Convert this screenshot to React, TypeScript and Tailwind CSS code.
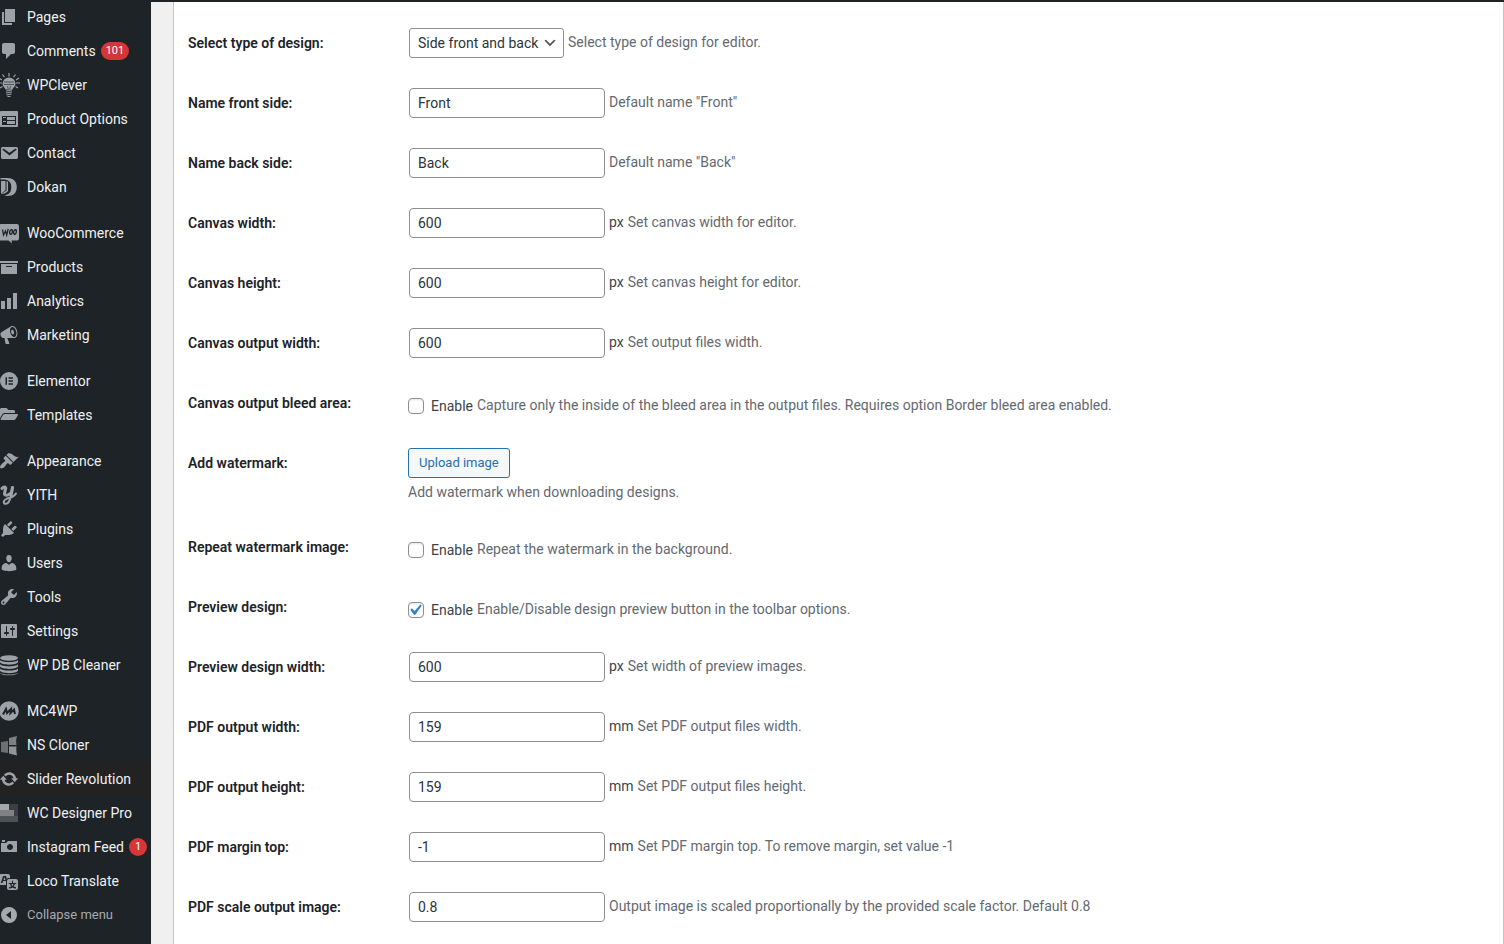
import React from 'react';
import { FaFolderOpen } from 'react-icons/fa';

type MenuItem = {
  name: string;
  icon: React.ReactNode;
  badge?: string;
  active?: boolean;
};

type Field = {
  id: string;
  label: string;
  type: 'select' | 'text' | 'checkbox' | 'button';
  value?: string;
  checked?: boolean;
  unit?: string;
  description: string;
};

function Icon({ d }: { d: string }) {
  return <path fillRule="evenodd" d={d} />;
}

const menu: MenuItem[][] = [
  [
    { name: 'Pages', icon: <Icon d="M6 15V2h10v13H6zm-1 1h8v2H3V5h2v11z" /> },
    {
      name: 'Comments',
      badge: '101',
      icon: <Icon d="M5 2h9c1.1 0 2 .9 2 2v7c0 1.1-.9 2-2 2h-2l-5 5v-5H5c-1.1 0-2-.9-2-2V4c0-1.1.9-2 2-2z" />,
    },
    {
      name: 'WPClever',
      icon: (
        <>
          <path d="M10 2.500a6.500 6.500 0 0 0-6.500 6.300c0 2.600 2.300 3.700 3 5.700h7c.7-2 3-3.100 3-5.700A6.500 6.500 0 0 0 10 2.500z" />
          <g fill="none" stroke="currentColor" strokeWidth="1.200">
            <path d="M10 -2v3.500M3.500 -.5l2 2.600M16.500 -.5l-2 2.600M0 3l3 2M20 3l-3 2M-1 8h4M17 8h4M1 13l2.500-1.500M19 13l-2.500-1.500" />
            <path d="M7 16l6-1M7 18l6-1M7.500 20l5-1M8.500 21.500h3" />
          </g>
          <path d="M5 7h10M5 9.500h10M8.500 11l.7 3M11.500 11l-.7 3" fill="none" stroke="#1d2327" strokeWidth=".6" />
        </>
      ),
    },
    {
      name: 'Product Options',
      icon: <Icon d="M2 2h16c.55 0 1 .45 1 1v14c0 .55-.45 1-1 1H2c-.55 0-1-.45-1-1V3c0-.55.45-1 1-1zm15 14V7H3v9h14zM4 8v1h3V8H4zm4 0v3h8V8H8zm-4 4v1h3v-1H4zm4 0v3h8v-3H8z" />,
    },
    {
      name: 'Contact',
      icon: <Icon d="M3.870 4h13.250C18.370 4 19 4.590 19 5.790v8.420c0 1.190-.63 1.790-1.880 1.790H3.870c-1.250 0-1.880-.6-1.880-1.790V5.790c0-1.200.63-1.790 1.880-1.790zm6.620 8.600l6.740-5.530c.24-.2.43-.66.13-1.070-.29-.41-.82-.42-1.170-.17l-5.700 3.860L4.800 5.830c-.35-.25-.88-.24-1.170.17-.3.41-.11.87.13 1.070z" />,
    },
    {
      name: 'Dokan',
      icon: (
        <>
          <path d="M1.500 1H8c6 0 9.800 3.200 9.800 9S14.500 19 8.500 19c-1.500 0-2-.3-2.500-1 4.500-.5 6.300-3.500 6.300-8 0-5-2.800-7.300-7.300-7.500H1.500z" />
          <path d="M2 4h4.500v9L2 17z" />
          <path d="M7.500 4.500H9v9.500c-1.500 1.800-4 3-7 3l5.500-3.500z" />
        </>
      ),
    },
  ],
  [
    {
      name: 'WooCommerce',
      icon: (
        <>
          <path d="M2.500 1h15A2.300 2.300 0 0 1 20 3.300v12a2.300 2.300 0 0 1-2.500 2.200h-5l.5 3-3.500-3h-7A2.300 2.300 0 0 1 0 15.300v-12A2.300 2.300 0 0 1 2.500 1z" />
          <path d="M3.500 6.500l1 5.500 2-4 1.200 4 1.500-6" fill="none" stroke="#1d2327" strokeWidth="1.300" />
          <g fill="none" stroke="#1d2327" strokeWidth="1.300">
            <ellipse cx="12" cy="9" rx="1.300" ry="2.300" transform="rotate(12 12 9)" />
            <ellipse cx="16" cy="9" rx="1.300" ry="2.300" transform="rotate(12 16 9)" />
          </g>
        </>
      ),
    },
    { name: 'Products', icon: <Icon d="M19 4v2H1V4h18zM2 7h16v10H2V7zm11 3V9H7v1h6z" /> },
    { name: 'Analytics', icon: <Icon d="M18 18V2h-4v16h4zm-6 0V7H8v11h4zm-6 0v-8H2v8h4z" /> },
    {
      name: 'Marketing',
      icon: <Icon d="M18.150 5.940c.46 1.620.38 3.220-.02 4.480-.42 1.280-1.260 2.180-2.300 2.480-.16.06-.26.06-.4.06-.06.02-.12.02-.18.02-.06.02-.14.02-.22.02h-6.800l2.220 5.500c.02.14-.06.26-.14.34-.08.1-.24.16-.34.16H6.950c-.1 0-.26-.06-.34-.16-.08-.08-.16-.2-.14-.34l-1-5.500H4.250l-.02-.02c-.5.06-1.080-.18-1.540-.62s-.88-1.080-1.060-1.880c-.24-.8-.2-1.560-.02-2.200.18-.62.58-1.080 1.060-1.300l.02-.02 9-5.400c.1-.06.18-.1.24-.16.06-.04.14-.08.24-.12.16-.08.28-.12.5-.18 1.040-.3 2.240.1 3.220.98s1.840 2.240 2.260 3.860zm-2.580 5.980h-.02c.4-.1.74-.34 1.040-.7.58-.7.86-1.760.86-3.040 0-.64-.1-1.300-.28-1.980-.34-1.360-1.020-2.500-1.780-3.240s-1.680-1.100-2.460-.88c-.82.22-1.400.96-1.700 2-.32 1.040-.28 2.360.06 3.720.38 1.360 1 2.500 1.800 3.240.78.74 1.620 1.100 2.480.88zm-2.540-7.080c.22-.04.42-.02.62.04.38.16.76.48 1.020 1s.42 1.200.42 1.780c0 .3-.04.56-.12.8-.18.48-.44.84-.86.94-.34.1-.8-.06-1.140-.4s-.64-.86-.78-1.500c-.18-.62-.12-1.240.02-1.720s.48-.84.82-.94z" />,
    },
  ],
  [
    { name: 'Elementor', icon: <Icon d="M10 1a9 9 0 1 1 0 18a9 9 0 0 1 0-18zM6.500 6.200v7.600H8V6.200zM9.500 6.200v1.500h4.500V6.200zM9.500 9.200v1.500h4.500V9.200zM9.500 12.300v1.500h4.500v-1.500z" /> },
    { name: 'Templates', icon: <FaFolderOpen x="1" y="0" size={18} /> },
  ],
  [
    {
      name: 'Appearance',
      icon: <Icon d="M14.480 11.060L7.410 3.990l1.500-1.500c.5-.56 2.300-.47 3.510.32 1.210.8 1.430 1.280 2.910 2.100 1.180.64 2.450 1.260 4.450.85zm-.71.71L6.700 4.700 4.930 6.470c-.39.39-.39 1.020 0 1.410l1.060 1.060c.39.39.39 1.030 0 1.420-.6.6-1.430 1.110-2.210 1.690-.35.26-.7.53-1.010.84C1.430 14.230.4 16.080 1.400 17.070c.99 1 2.840-.03 4.180-1.360.31-.31.58-.66.85-1.020.57-.78 1.080-1.610 1.690-2.210.39-.39 1.020-.39 1.410 0l1.060 1.060c.39.39 1.020.39 1.410 0z" />,
    },
    {
      name: 'YITH',
      icon: (
        <g fill="none" stroke="currentColor" strokeLinecap="round">
          <path d="M3 3.500c1.500-2 4-2 3.700 0L5.500 8c-.5 3 3 3 5.500 .5" strokeWidth="3" />
          <path d="M13.500 2l-1.500 8.500c-1 5-2.800 8.300-5.200 8.300-3 0-2.800-3.500.700-5L13 12c2-.8 3-1.800 4-3.500" strokeWidth="2" />
          <path d="M13.500 2.500l-1.500 8" strokeWidth="3.200" />
        </g>
      ),
    },
    {
      name: 'Plugins',
      icon: <Icon d="M13.110 4.360L9.870 7.600 8 5.730l3.240-3.240c.35-.34 1.050-.2 1.560.32.52.51.66 1.210.31 1.550zm-8 1.770l.91-1.120 9.010 9.010-1.190.84c-.71.71-2.630 1.160-3.820 1.160H6.140L4.900 17.260c-.59.59-1.540.59-2.120 0-.59-.58-.59-1.530 0-2.120l1.240-1.240v-3.880c0-1.130.4-3.190 1.090-3.890zm7.260 3.970l3.240-3.240c.34-.35 1.040-.21 1.550.31.52.51.66 1.210.31 1.550l-3.240 3.250z" />,
    },
    {
      name: 'Users',
      icon: <Icon d="M10 9.250c-2.270 0-2.730-3.440-2.730-3.440C7 4.020 7.820 2 9.970 2c2.160 0 2.980 2.020 2.710 3.810 0 0-.41 3.440-2.680 3.440zm0 2.570L12.720 10c2.390 0 4.520 2.330 4.520 4.530v2.490s-3.650 1.130-7.240 1.130c-3.650 0-7.240-1.130-7.240-1.130v-2.490c0-2.250 1.940-4.480 4.470-4.480z" />,
    },
    {
      name: 'Tools',
      icon: <Icon d="M16.680 9.770c-1.340 1.340-3.300 1.670-4.950.99l-5.410 6.520c-.99.99-2.590.99-3.580 0s-.99-2.590 0-3.570l6.520-5.420c-.68-1.650-.35-3.610.99-4.950 1.280-1.280 3.120-1.620 4.720-1.060l-2.890 2.890 2.820 2.820 2.860-2.870c.53 1.580.18 3.390-1.080 4.650zM3.810 16.210c.4.39 1.040.39 1.430 0 .4-.4.4-1.040 0-1.430-.39-.4-1.030-.4-1.430 0-.39.39-.39 1.030 0 1.430z" />,
    },
    {
      name: 'Settings',
      icon: <Icon d="M18 16V4c0-.55-.45-1-1-1H3c-.55 0-1 .45-1 1v12c0 .55.45 1 1 1h14c.55 0 1-.45 1-1zM8 11h1c.55 0 1 .45 1 1s-.45 1-1 1H8v1.500c0 .28-.22.5-.5.5s-.5-.22-.5-.5V13H6c-.55 0-1-.45-1-1s.45-1 1-1h1V5.500c0-.28.22-.5.5-.5s.5.22.5.5V11zm5-2h-1c-.55 0-1-.45-1-1s.45-1 1-1h1V5.500c0-.28.22-.5.5-.5s.5.22.5.5V7h1c.55 0 1 .45 1 1s-.45 1-1 1h-1v5.500c0 .28-.22.5-.5.5s-.5-.22-.5-.5V9z" />,
    },
    {
      name: 'WP DB Cleaner',
      icon: (
        <>
          <ellipse cx="10" cy="3" rx="9" ry="2.800" />
          <path d="M1 5c2 2.800 16 2.800 18 0v2.300c-2 3.200-16 3.200-18 0zM1 9.300c2 2.800 16 2.800 18 0v2.300c-2 3.200-16 3.200-18 0zM1 13.500c2 2.800 16 2.800 18 0v2.300c-2 3.200-16 3.200-18 0zM1 17.500c2 2.800 16 2.800 18 0-.500 3.500-17 4-18 0z" />
        </>
      ),
    },
  ],
  [
    {
      name: 'MC4WP',
      icon: (
        <>
          <circle cx="10" cy="10" r="9.800" />
          <path d="M4 13.500l3-5.500 1 4 4-4-.500 4 3.500-3.500 1 4.500" fill="none" stroke="#1d2327" strokeWidth="2" />
        </>
      ),
    },
    {
      name: 'NS Cloner',
      icon: (
        <>
          <path d="M2 7l7-1v12l-7-1z" fill="#6d7072" />
          <path d="M10 3l8-2c-1 3-1 6-.500 9H10z" fill="#7e8183" />
          <path d="M10 11.500h7.500c-.500 3 0 6 .500 9l-8-2z" fill="#919496" />
        </>
      ),
    },
    {
      name: 'Slider Revolution',
      active: true,
      icon: <Icon d="M10.200 3.280c3.530 0 6.430 2.610 6.920 6h2.080l-3.500 4-3.500-4h2.320c-.45-1.970-2.210-3.450-4.320-3.450-1.450 0-2.730.71-3.540 1.780L4.950 5.660C6.230 4.200 8.110 3.280 10.200 3.280zm-.4 13.440c-3.520 0-6.430-2.610-6.920-6H.8l3.500-4c1.170 1.330 2.330 2.670 3.500 4H5.480c.45 1.970 2.210 3.450 4.320 3.450 1.450 0 2.730-.71 3.540-1.780l1.710 1.950c-1.280 1.460-3.150 2.380-5.250 2.380z" />,
    },
    {
      name: 'WC Designer Pro',
      icon: (
        <>
          <path d="M1 1h18v18H1z" fill="#3c3f42" />
          <path d="M1 13h18v6H1z" fill="#4f5254" />
          <path d="M1 7h14v6H1z" fill="#7f8183" />
          <path d="M1 1h9v6H1z" fill="#a4a7aa" />
        </>
      ),
    },
    {
      name: 'Instagram Feed',
      badge: '1',
      icon: <Icon d="M6 5V3H3v2h3zm12 10V4H9L7 6H2v9h16zm-7-8c1.650 0 3 1.350 3 3s-1.350 3-3 3-3-1.350-3-3 1.350-3 3-3z" />,
    },
    {
      name: 'Loco Translate',
      icon: <Icon d="M11 7H9.490c-.63 0-1.250.3-1.590.7L7 5H4.130l-2.390 7h1.690l.74-2H7v4H2c-1.100 0-2-.9-2-2V5c0-1.100.9-2 2-2h7c1.100 0 2 .9 2 2v2zM6.510 9H4.490l1-2.930zM10 8h7c1.100 0 2 .9 2 2v7c0 1.100-.9 2-2 2h-7c-1.100 0-2-.9-2-2v-7c0-1.100.9-2 2-2zm7.250 5v-1.080h-3.170V9.750h-1.160v2.170H9.750V13h1.280c.11.85.56 1.850 1.280 2.620-.87.36-1.890.62-2.310.62-.01.02.22.97.2 1.460.84 0 2.210-.5 3.280-1.150 1.090.65 2.480 1.150 3.340 1.150-.02-.49.2-1.440.2-1.460-.43 0-1.490-.27-2.380-.63.7-.77 1.140-1.770 1.250-2.610h1.060zm-3.810 1.930c-.5-.46-.85-1.130-1.010-1.930h2.090c-.17.8-.51 1.470-1 1.930l-.04.03s-.03-.02-.04-.03z" />,
    },
  ],
];

const fields: Field[] = [
  { id: 'type', label: 'Select type of design:', type: 'select', value: 'Side front and back', description: 'Select type of design for editor.' },
  { id: 'front', label: 'Name front side:', type: 'text', value: 'Front', description: 'Default name "Front"' },
  { id: 'back', label: 'Name back side:', type: 'text', value: 'Back', description: 'Default name "Back"' },
  { id: 'canvas-width', label: 'Canvas width:', type: 'text', value: '600', unit: 'px', description: 'Set canvas width for editor.' },
  { id: 'canvas-height', label: 'Canvas height:', type: 'text', value: '600', unit: 'px', description: 'Set canvas height for editor.' },
  { id: 'output-width', label: 'Canvas output width:', type: 'text', value: '600', unit: 'px', description: 'Set output files width.' },
  {
    id: 'bleed',
    label: 'Canvas output bleed area:',
    type: 'checkbox',
    description: 'Capture only the inside of the bleed area in the output files. Requires option Border bleed area enabled.',
  },
  { id: 'watermark', label: 'Add watermark:', type: 'button', value: 'Upload image', description: 'Add watermark when downloading designs.' },
  { id: 'repeat', label: 'Repeat watermark image:', type: 'checkbox', description: 'Repeat the watermark in the background.' },
  { id: 'preview', label: 'Preview design:', type: 'checkbox', checked: true, description: 'Enable/Disable design preview button in the toolbar options.' },
  { id: 'preview-width', label: 'Preview design width:', type: 'text', value: '600', unit: 'px', description: 'Set width of preview images.' },
  { id: 'pdf-width', label: 'PDF output width:', type: 'text', value: '159', unit: 'mm', description: 'Set PDF output files width.' },
  { id: 'pdf-height', label: 'PDF output height:', type: 'text', value: '159', unit: 'mm', description: 'Set PDF output files height.' },
  { id: 'pdf-margin', label: 'PDF margin top:', type: 'text', value: '-1', unit: 'mm', description: 'Set PDF margin top. To remove margin, set value -1' },
  { id: 'pdf-scale', label: 'PDF scale output image:', type: 'text', value: '0.8', description: 'Output image is scaled proportionally by the provided scale factor. Default 0.8' },
];

function Sidebar() {
  return (
    <nav className="flex w-[151px] shrink-0 flex-col gap-3 overflow-hidden bg-[#1d2327] text-[#f0f0f1]">
      {menu.map((group, i) => (
        <ul key={i}>
          {group.map((item) => (
            <li key={item.name} className={item.active ? 'bg-[#222222]' : ''}>
              <a href="#" className="flex h-[34px] items-center gap-2 whitespace-nowrap">
                <svg viewBox="0 0 20 20" className="-ml-px size-5 shrink-0 overflow-visible fill-current text-[#9ca2a7]" aria-hidden="true">
                  {item.icon}
                </svg>
                <span className="flex items-center gap-[5px]">
                  {item.name}
                  {item.badge && (
                    <span className="h-[18px] min-w-[18px] rounded-full bg-[#d63638] px-[5px] text-center text-[11px] leading-[18px] text-white">
                      {item.badge}
                    </span>
                  )}
                </span>
              </a>
            </li>
          ))}
          {i === menu.length - 1 && (
            <li>
              <button type="button" className="flex h-[34px] items-center gap-2 text-[13px] text-[#a7aaad]">
                <svg viewBox="0 0 20 20" className="-ml-px size-5 shrink-0 fill-current" aria-hidden="true">
                  <Icon d="M10 2a8 8 0 1 1 0 16a8 8 0 0 1 0-16zM12 14V6l-5 4z" />
                </svg>
                Collapse menu
              </button>
            </li>
          )}
        </ul>
      ))}
    </nav>
  );
}

function Control({ field }: { field: Field }) {
  if (field.type === 'button') {
    return (
      <div className="pb-[15px]">
        <button
          id={field.id}
          type="button"
          className="h-[30px] rounded-[3px] border border-[#2271b1] bg-[#f6f7f7] px-[10px] text-[13px] text-[#2271b1]"
        >
          {field.value}
        </button>
        <p className="pt-1 leading-5 text-[#646970]">{field.description}</p>
      </div>
    );
  }

  if (field.type === 'checkbox') {
    return (
      <div className="flex gap-1 pt-1">
        <label className="flex items-center gap-[7px] leading-7">
          <span className="relative flex">
            <input
              id={field.id}
              type="checkbox"
              defaultChecked={field.checked}
              className="peer size-4 appearance-none rounded-[4px] border border-[#8c8f94] bg-white shadow-[inset_0_1px_2px_rgba(0,0,0,0.1)]"
            />
            <svg viewBox="0 0 20 20" className="pointer-events-none absolute -top-[3px] -left-1 hidden size-[22px] fill-[#3582c4] peer-checked:block" aria-hidden="true">
              <path d="M14.830 4.890l1.340.94-5.810 8.380H9.020L5.780 9.670l1.340-1.250 2.570 2.400z" />
            </svg>
          </span>
          Enable
        </label>
        <p className="leading-[26px] text-[#646970]">{field.description}</p>
      </div>
    );
  }

  return (
    <div className="ml-px flex gap-1">
      {field.type === 'select' ? (
        <div className="relative">
          <select
            id={field.id}
            defaultValue={field.value}
            className="h-[30px] appearance-none rounded-[3px] border border-[#8c8f94] bg-white pr-6 pl-2 text-[#2c3338]"
          >
            <option>{field.value}</option>
          </select>
          <svg viewBox="0 0 20 20" className="pointer-events-none absolute top-[7px] right-[6px] size-4 fill-[#555]" aria-hidden="true">
            <path d="M5 6l5 5 5-5 2 1-7 7-7-7 2-1z" />
          </svg>
        </div>
      ) : (
        <input
          id={field.id}
          type="text"
          defaultValue={field.value}
          className="h-[30px] w-[196px] rounded-[4px] border border-[#8c8f94] bg-white px-2 text-[#2c3338]"
        />
      )}
      <div className="flex gap-1 leading-7">
        {field.unit && <span>{field.unit}</span>}
        <p className="text-[#646970]">{field.description}</p>
      </div>
    </div>
  );
}

export default function App() {
  return (
    <div className="flex min-h-screen bg-[#f0f0f1] font-[Roboto,sans-serif] text-[14px] text-[#3c434a]">
      <Sidebar />
      <main className="flex min-w-0 flex-1 border-t-2 border-[#1d2327] pl-[22px]">
        <form className="flex-1 border-x border-[#c3c4c7] bg-white pt-[11px] pl-[14px]">
          {fields.map((field) => (
            <div key={field.id} className="flex min-h-[60px]">
              <label htmlFor={field.id} className="w-[220px] shrink-0 pt-5 leading-5 font-semibold text-[#1d2327]">
                {field.label}
              </label>
              <div className="min-w-0 flex-1 pt-[15px]">
                <Control field={field} />
              </div>
            </div>
          ))}
        </form>
      </main>
    </div>
  );
}
